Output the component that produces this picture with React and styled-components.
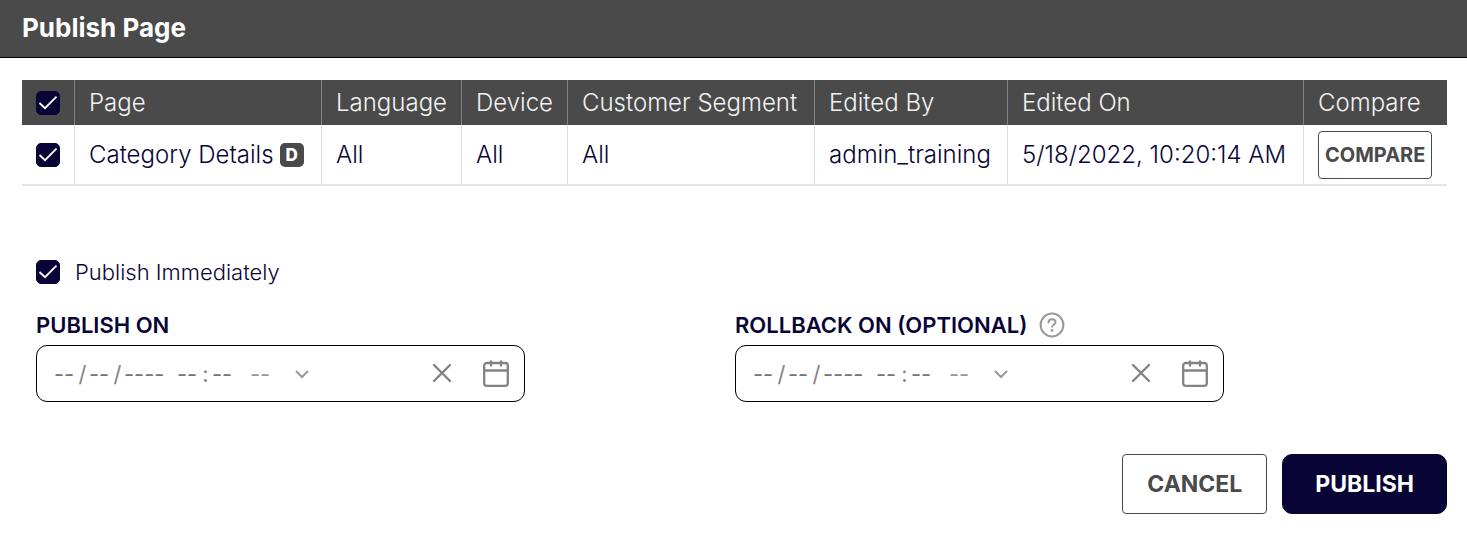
import React, { useState } from 'react';
import styled, { createGlobalStyle } from 'styled-components';

const GlobalStyle = createGlobalStyle`
  * {
    box-sizing: border-box;
  }

  body {
    margin: 0;
    background-color: white;
    color: #080536;
    font-family: Inter, "Liberation Sans", sans-serif;
    font-size: 24px;
    font-weight: 300;
    line-height: 32px;
  }

  button, input, select {
    font-family: inherit;
  }
`;

const Header = styled.header`
  padding: 12px 22px 13px;
  background-color: #4a4a4a;
  border-bottom: 1px solid black;
`;

const Title = styled.h1`
  margin: 0;
  color: white;
  font-size: 26px;
  font-weight: 700;
  line-height: 32px;
`;

const Main = styled.main`
  padding: 22px 20px 36px 22px;
`;

const Table = styled.table`
  width: 100%;
  table-layout: fixed;
  border-collapse: separate;
  border-spacing: 0;
`;

const Col = styled.col`
  width: ${(props) => props.$size}px;
`;

const HeadCell = styled.th`
  height: 45px;
  padding: 0 14px;
  background-color: #4a4a4a;
  border-right: 1px solid #838383;
  color: #f2f2f2;
  font-weight: 350;
  text-align: left;
  white-space: nowrap;

  &:last-child {
    border-right: none;
  }
`;

const Cell = styled.td`
  height: 61px;
  padding: 0 14px;
  border-right: 1px solid #dedede;
  border-bottom: 2px solid #e6e6e6;
  white-space: nowrap;

  &:last-child {
    border-right: none;
  }
`;

const CheckWrap = styled.span`
  display: grid;
  width: 24px;
  height: 24px;

  input, svg {
    grid-area: 1 / 1;
  }

  svg {
    pointer-events: none;
  }
`;

const CheckInput = styled.input`
  appearance: none;
  width: 24px;
  height: 24px;
  margin: 0;
  background-color: white;
  border: 1px solid #080536;
  border-radius: 5px;
  cursor: pointer;

  &:checked {
    background-color: #080536;
  }
`;

const PageName = styled.div`
  display: flex;
  align-items: center;
  gap: 6px;
`;

const Tag = styled.span`
  width: 24px;
  height: 24px;
  background-color: #4a4a4a;
  border-radius: 5px;
  color: white;
  font-size: 17px;
  font-weight: 800;
  line-height: 24px;
  text-align: center;
`;

const Button = styled.button`
  height: 60px;
  padding: 0 24px;
  background-color: white;
  border: 1px solid #4a4a4a;
  border-radius: 4px;
  color: #4a4a4a;
  font-size: 23px;
  font-weight: 700;
  cursor: pointer;
`;

const CompareButton = styled(Button)`
  display: block;
  height: 48px;
  padding: 0 6px;
  font-size: 20px;
`;

const PublishButton = styled(Button)`
  padding: 0 32px;
  background-color: #080536;
  border-color: #080536;
  border-radius: 10px;
  color: white;
`;

const CheckLabel = styled.label`
  display: flex;
  align-items: center;
  gap: 15px;
  width: fit-content;
  margin: 70px 14px 0;
  font-size: 22px;
`;

const Fields = styled.div`
  display: grid;
  grid-template-columns: 1fr 1fr;
  margin: 21px 13px 0 14px;
`;

const Fieldset = styled.fieldset`
  min-width: 0;
  margin: 0;
  padding: 0;
  border: none;
`;

const Legend = styled.legend`
  display: flex;
  align-items: center;
  gap: 12px;
  padding: 0;
  margin-bottom: 4px;
  font-size: 22px;
  font-weight: 600;
`;

const PickerBox = styled.div`
  display: flex;
  align-items: center;
  width: 70%;
  height: 57px;
  padding: 0 14px 0 17px;
  border: 1px solid black;
  border-radius: 11px;
  color: #838383;
  font-size: 22px;
`;

const Part = styled.input`
  width: ${(props) => (props.$year ? 42 : 22)}px;
  margin-left: ${(props) => (props.$gap ? 11 : 0)}px;
  padding: 0;
  background: none;
  border: none;
  color: #080536;
  font-size: 22px;
  font-weight: 400;

  &::placeholder {
    color: #757575;
  }
`;

const Divider = styled.span`
  width: 13px;
  font-weight: 400;
  text-align: center;
`;

const Period = styled.span`
  display: grid;
  align-items: center;
  width: 60px;
  margin-left: 16px;

  select, svg {
    grid-area: 1 / 1;
  }

  svg {
    justify-self: end;
    pointer-events: none;
  }
`;

const PeriodSelect = styled.select`
  appearance: none;
  width: 100%;
  padding: 0;
  background: none;
  border: none;
  color: #999;
  font-size: 22px;
  font-weight: 400;
`;

const IconButton = styled.button`
  display: flex;
  padding: 0;
  margin-left: ${(props) => (props.$push ? 'auto' : '26px')};
  background: none;
  border: none;
  color: #838383;
  cursor: pointer;
`;

const Footer = styled.footer`
  display: flex;
  justify-content: flex-end;
  gap: 15px;
  margin-top: 52px;
`;

const Checkbox = ({ checked, ...rest }) => (
  <CheckWrap>
    <CheckInput type="checkbox" checked={checked} {...rest} />
    {checked && (
      <svg width="24" height="24" viewBox="0 0 24 24" fill="none" stroke="white" strokeWidth="1.8">
        <path d="M3.5 12 9 17.2 20.5 5.7" />
      </svg>
    )}
  </CheckWrap>
);

const HelpIcon = () => (
  <svg width="26" height="26" viewBox="0 0 26 26" fill="none" stroke="#999" strokeWidth="2" strokeLinecap="round">
    <circle cx="13" cy="13" r="11.4" />
    <path d="M9.5 10.4c.2-2 1.6-3.1 3.5-3.1s3.5 1.2 3.5 3c0 2.3-3.3 2.5-3.3 4.4" />
    <circle cx="13" cy="18.4" r="1.3" fill="#999" stroke="none" />
  </svg>
);

const ClearIcon = () => (
  <svg width="28" height="28" viewBox="0 0 28 28" fill="none" stroke="currentColor" strokeWidth="2.4" strokeLinecap="round">
    <path d="M6 5 22 21M22 5 6 21" />
  </svg>
);

const CalendarIcon = () => (
  <svg width="28" height="28" viewBox="0 0 28 28" fill="none" stroke="currentColor" strokeWidth="2.3" strokeLinecap="round">
    <rect x="2.2" y="3" width="23.6" height="22.8" rx="2.5" />
    <path d="M2.2 10.5H25.8M9 1.3v4.4M19 1.3v4.4" />
  </svg>
);

const DateTimePicker = ({ name }) => (
  <PickerBox>
    <Part aria-label={`${name} month`} placeholder="--" />
    <Divider>/</Divider>
    <Part aria-label={`${name} day`} placeholder="--" />
    <Divider>/</Divider>
    <Part aria-label={`${name} year`} placeholder="----" $year />
    <Part aria-label={`${name} hour`} placeholder="--" $gap />
    <Divider>:</Divider>
    <Part aria-label={`${name} minute`} placeholder="--" />
    <Period>
      <PeriodSelect aria-label={`${name} AM or PM`} defaultValue="">
        <option value="">--</option>
        <option value="am">AM</option>
        <option value="pm">PM</option>
      </PeriodSelect>
      <svg width="16" height="16" viewBox="0 0 16 16" fill="none" stroke="#999" strokeWidth="2">
        <path d="m2 5 6 6 6-6" />
      </svg>
    </Period>
    <IconButton type="button" aria-label={`Clear ${name}`} $push>
      <ClearIcon />
    </IconButton>
    <IconButton type="button" aria-label={`Open ${name} calendar`}>
      <CalendarIcon />
    </IconButton>
  </PickerBox>
);

const columnSizes = [53, 247, 140, 106, 247, 193, 296, 143];
const columns = ['Page', 'Language', 'Device', 'Customer Segment', 'Edited By', 'Edited On', 'Compare'];

const App = () => {
  const [selected, setSelected] = useState(true);
  const [immediate, setImmediate] = useState(true);

  const toggleSelected = () => {
    setSelected(!selected);
  };

  return (
    <>
      <GlobalStyle />
      <Header>
        <Title>Publish Page</Title>
      </Header>
      <Main>
        <Table>
          <colgroup>
            {columnSizes.map((size, index) => (
              <Col key={index} $size={size} />
            ))}
          </colgroup>
          <thead>
            <tr>
              <HeadCell>
                <Checkbox aria-label="Select all pages" checked={selected} onChange={toggleSelected} />
              </HeadCell>
              {columns.map((column) => (
                <HeadCell key={column}>{column}</HeadCell>
              ))}
            </tr>
          </thead>
          <tbody>
            <tr>
              <Cell>
                <Checkbox aria-label="Select Category Details" checked={selected} onChange={toggleSelected} />
              </Cell>
              <Cell>
                <PageName>
                  Category Details <Tag>D</Tag>
                </PageName>
              </Cell>
              <Cell>All</Cell>
              <Cell>All</Cell>
              <Cell>All</Cell>
              <Cell>admin_training</Cell>
              <Cell>5/18/2022, 10:20:14 AM</Cell>
              <Cell>
                <CompareButton type="button">COMPARE</CompareButton>
              </Cell>
            </tr>
          </tbody>
        </Table>
        <CheckLabel>
          <Checkbox checked={immediate} onChange={() => setImmediate(!immediate)} />
          Publish Immediately
        </CheckLabel>
        <Fields>
          <Fieldset>
            <Legend>PUBLISH ON</Legend>
            <DateTimePicker name="Publish on" />
          </Fieldset>
          <Fieldset>
            <Legend>
              ROLLBACK ON (OPTIONAL)
              <HelpIcon />
            </Legend>
            <DateTimePicker name="Rollback on" />
          </Fieldset>
        </Fields>
        <Footer>
          <Button type="button">CANCEL</Button>
          <PublishButton type="button">PUBLISH</PublishButton>
        </Footer>
      </Main>
    </>
  );
};

export default App;
